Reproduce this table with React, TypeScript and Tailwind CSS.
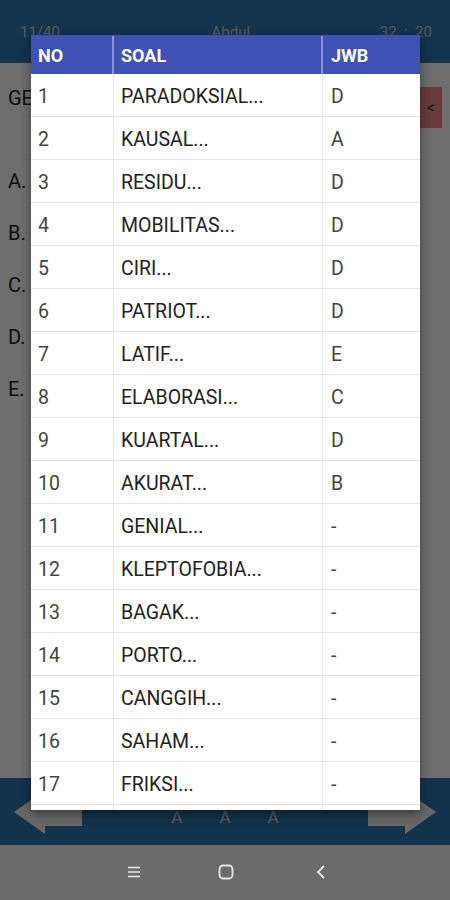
const rows: [number, string, string][] = [
  [1, 'PARADOKSIAL...', 'D'],
  [2, 'KAUSAL...', 'A'],
  [3, 'RESIDU...', 'D'],
  [4, 'MOBILITAS...', 'D'],
  [5, 'CIRI...', 'D'],
  [6, 'PATRIOT...', 'D'],
  [7, 'LATIF...', 'E'],
  [8, 'ELABORASI...', 'C'],
  [9, 'KUARTAL...', 'D'],
  [10, 'AKURAT...', 'B'],
  [11, 'GENIAL...', '-'],
  [12, 'KLEPTOFOBIA...', '-'],
  [13, 'BAGAK...', '-'],
  [14, 'PORTO...', '-'],
  [15, 'CANGGIH...', '-'],
  [16, 'SAHAM...', '-'],
  [17, 'FRIKSI...', '-'],
  [18, 'LUGAS...', '-'],
];

const options = ['A.', 'B.', 'C.', 'D.', 'E.'];

function ArrowLeft() {
  return (
    <svg width="90" height="67" viewBox="0 0 90 67">
      <polygon points="14,34 45,12 45,20 82,20 82,48 45,48 45,56" fill="#f2f2f2" />
    </svg>
  );
}

function ArrowRight() {
  return (
    <svg width="90" height="67" viewBox="0 0 90 67">
      <polygon points="76,34 45,12 45,20 8,20 8,48 45,48 45,56" fill="#f2f2f2" />
    </svg>
  );
}

export default function App() {
  return (
    <div className="flex h-[900px] w-[450px] flex-col overflow-hidden font-['Roboto',sans-serif]">
      <div className="relative flex h-[845px] flex-col">
        {/* top bar */}
        <div className="flex h-[63px] items-center justify-between bg-[#3079b4] pl-[20px] pr-[18px] pt-[1px] text-[15px] text-[#c6d2dc]">
          <span>11/40</span>
          <span className="pl-[22px]">Abdul</span>
          <span className="whitespace-pre">32  :  20</span>
        </div>

        {/* question body */}
        <div className="flex flex-1 flex-col bg-white">
          <div className="flex items-start justify-between pt-[24px] pl-[8px] pr-[8px]">
            <span className="-mt-[4px] text-[20px] text-[#222]">GENIAL</span>
            <div className="flex h-[41px] w-[23px] items-center justify-center bg-[#f08a90] text-[16px] text-[#333]">
              &lt;
            </div>
          </div>
          <div className="mt-[41px] flex flex-col gap-[28px] pl-[8px] text-[20px] leading-[24px] text-[#222]">
            {options.map((o) => (
              <span key={o}>{o}</span>
            ))}
          </div>
        </div>

        {/* bottom bar */}
        <div className="flex h-[67px] items-start justify-between bg-[#2c74ae]">
          <ArrowLeft />
          <div className="flex gap-[37px] pt-[27px] text-[17px] text-[#cfd8e0]">
            <span>A</span>
            <span>A</span>
            <span>A</span>
          </div>
          <ArrowRight />
        </div>

        {/* dim overlay */}
        <div className="absolute inset-0 bg-black/[0.57]" />

        {/* answer dialog */}
        <div className="absolute top-[35px] left-[31px] h-[775px] w-[389px] overflow-hidden bg-white shadow-[0_4px_10px_rgba(0,0,0,0.45)]">
          <div className="flex h-[39px] items-center bg-[#3f51b5] pt-[1px] text-[18px] font-bold text-white">
            <div className="flex h-full w-[83px] items-center border-r-2 border-[#8a93d6] pl-[7px]">NO</div>
            <div className="flex h-full w-[209px] items-center border-r-2 border-[#8a93d6] pl-[7px]">SOAL</div>
            <div className="flex h-full flex-1 items-center pl-[8px]">JWB</div>
          </div>
          {rows.map(([no, soal, jwb]) => (
            <div key={no} className="flex h-[43px] items-center border-b border-[#e4e4e4] text-[19.5px]">
              <div className="flex h-full w-[83px] items-center border-r border-[#e8e8e8] pt-[4px] pl-[7px] text-[#444]">{no}</div>
              <div className="flex h-full w-[209px] items-center border-r border-[#e8e8e8] pt-[4px] pl-[7px] text-[#222]">{soal}</div>
              <div className="flex h-full flex-1 items-center pt-[4px] pl-[8px] text-[#444]">{jwb}</div>
            </div>
          ))}
        </div>
      </div>

      {/* system nav bar */}
      <div className="flex h-[55px] items-center justify-center bg-[#6b6b6b] pb-[1px] pl-[3px]">
        <svg width="14" height="12" viewBox="0 0 14 12">
          <path d="M1 1.5h12M1 6h12M1 10.5h12" stroke="#e8e8e8" strokeWidth="1.6" />
        </svg>
        <svg className="ml-[77px]" width="16" height="16" viewBox="0 0 16 16">
          <rect x="1.5" y="1.5" width="13" height="13" rx="3.5" fill="none" stroke="#e8e8e8" strokeWidth="1.8" />
        </svg>
        <svg className="ml-[81px]" width="12" height="16" viewBox="0 0 12 16">
          <path d="M9 2L3 8l6 6" fill="none" stroke="#e8e8e8" strokeWidth="1.8" />
        </svg>
      </div>
    </div>
  );
}
